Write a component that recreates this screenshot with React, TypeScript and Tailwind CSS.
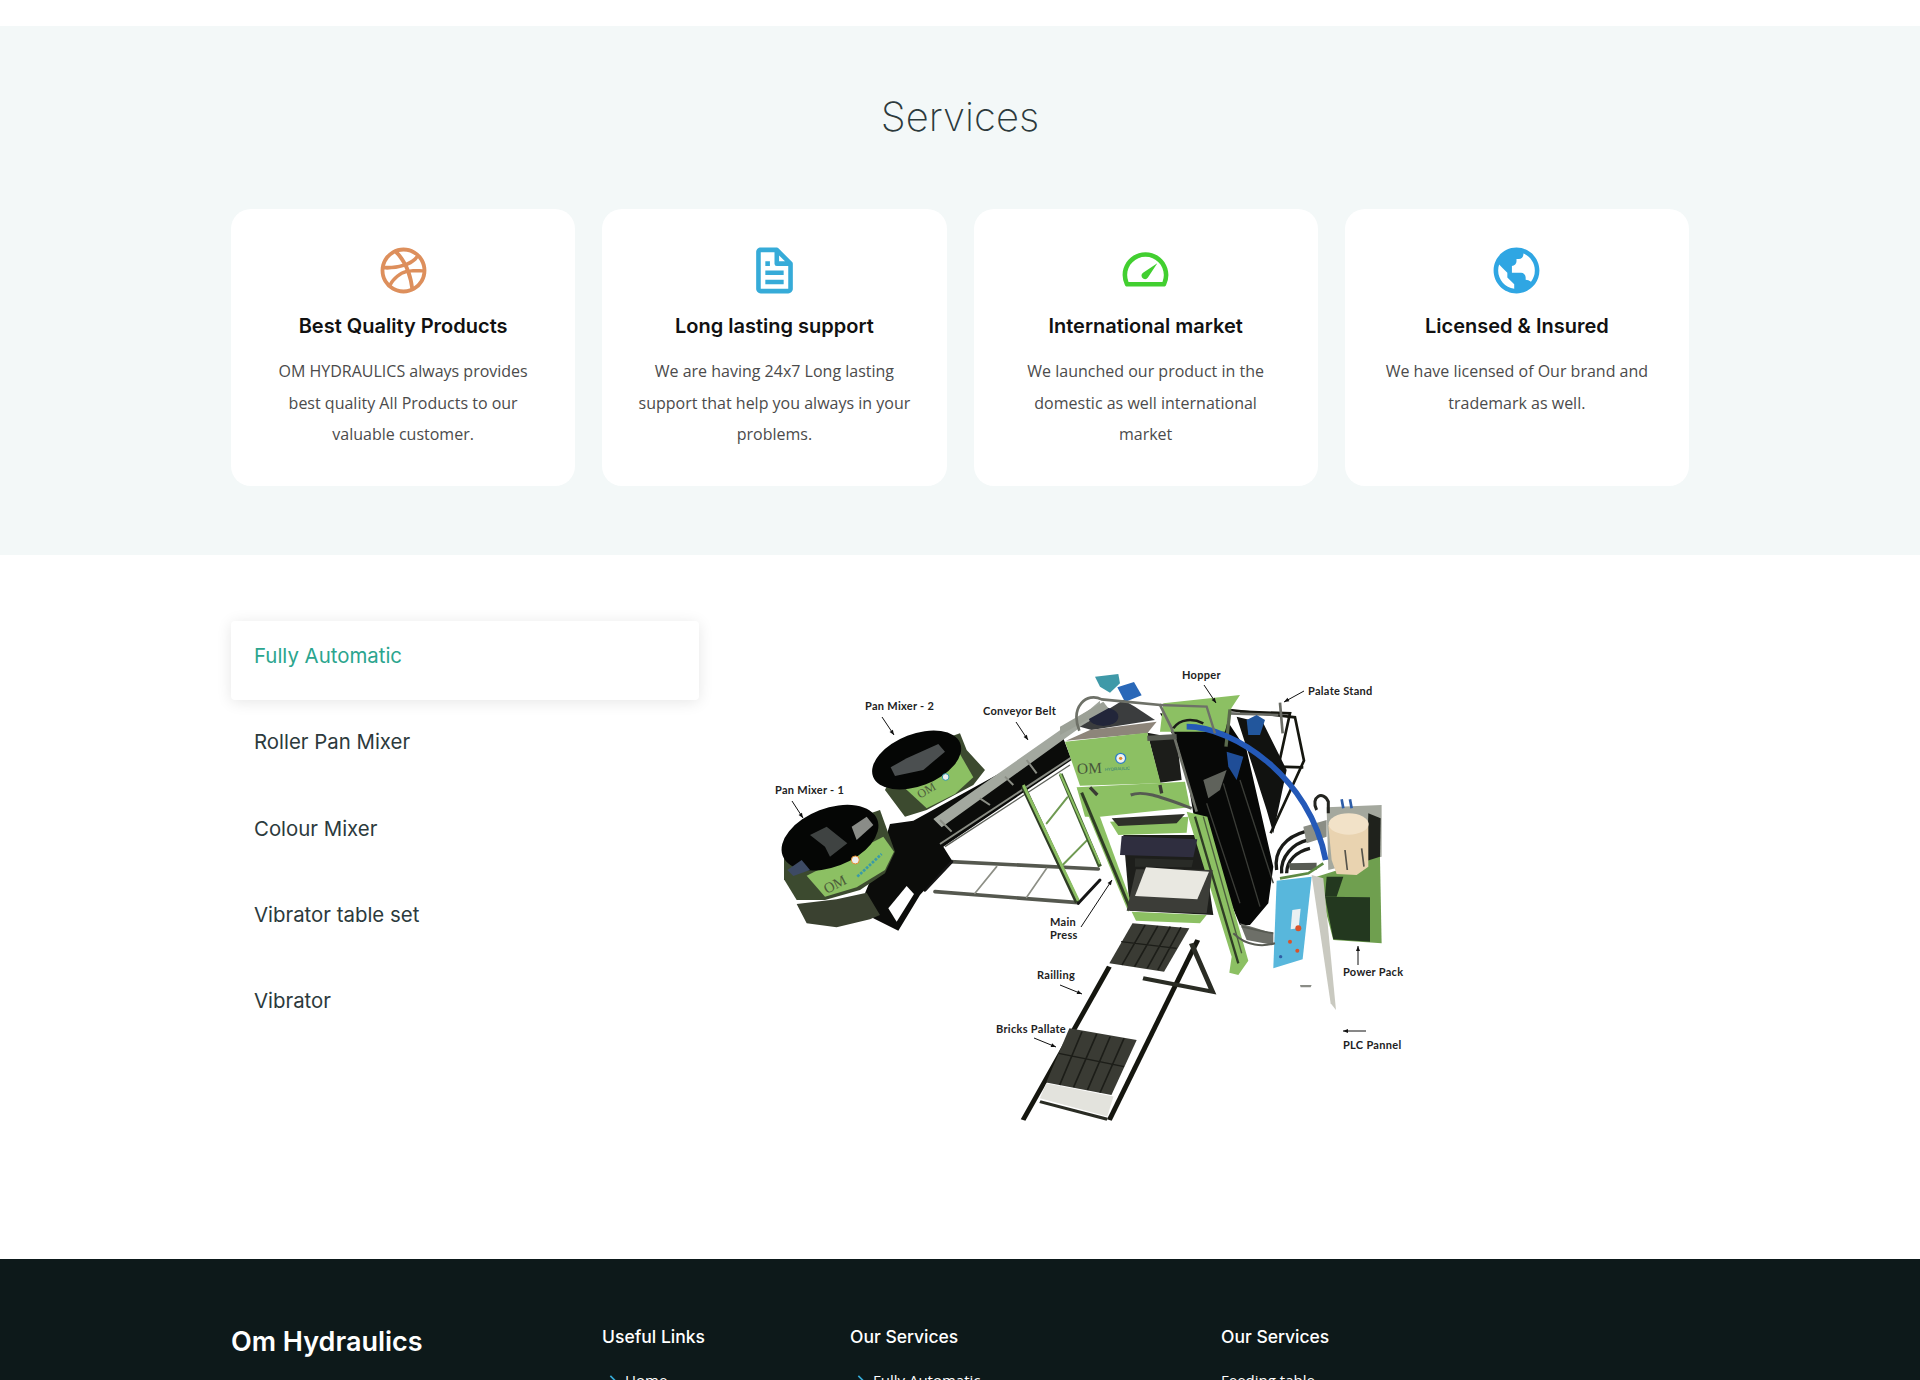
import { BiLogoDribbble, BiFile, BiTachometer, BiWorld, BiChevronRight } from 'react-icons/bi';

const GREEN = '#8cc063';
const DARK_GREEN = '#3c4a2f';

const services = [
  {
    icon: <BiLogoDribbble size={55} className="text-[#dd8f5c]" />,
    title: 'Best Quality Products',
    lines: ['OM HYDRAULICS always provides', 'best quality All Products to our', 'valuable customer.'],
  },
  {
    icon: <BiFile size={55} className="text-[#36abd8]" />,
    title: 'Long lasting support',
    lines: ['We are having 24x7 Long lasting', 'support that help you always in your', 'problems.'],
  },
  {
    icon: <BiTachometer size={55} className="text-[#42cf30]" />,
    title: 'International market',
    lines: ['We launched our product in the', 'domestic as well international', 'market'],
  },
  {
    icon: <BiWorld size={55} className="text-[#2fa6e3]" />,
    title: 'Licensed & Insured',
    lines: ['We have licensed of Our brand and', 'trademark as well.'],
  },
];

const tabs = ['Fully Automatic', 'Roller Pan Mixer', 'Colour Mixer', 'Vibrator table set', 'Vibrator'];

const labels = [
  { x: 1182, y: 679, t: 'Hopper' },
  { x: 1308, y: 695, t: 'Palate Stand' },
  { x: 865, y: 710, t: 'Pan Mixer - 2' },
  { x: 983, y: 715, t: 'Conveyor Belt' },
  { x: 775, y: 794, t: 'Pan Mixer - 1' },
  { x: 1050, y: 926, t: 'Main' },
  { x: 1050, y: 939, t: 'Press' },
  { x: 1343, y: 976, t: 'Power Pack' },
  { x: 1037, y: 979, t: 'Railling' },
  { x: 996, y: 1033, t: 'Bricks Pallate' },
  { x: 1343, y: 1049, t: 'PLC Pannel' },
];

// page coordinates: viewBox starts where the picture sits on the page
function Machine() {
  return (
    <svg width={660} height={500} viewBox="760 650 660 500" className="block shrink-0">
      {/* left half, mixers and conveyor */}
      <g transform="translate(770 670) scale(0.3333)">
        {/* frame under the conveyor */}
        <g fill="none" strokeLinecap="round">
          <path d="M540 575 L985 597" stroke="#55584f" strokeWidth="11" />
          <path d="M495 665 L925 698" stroke="#55584f" strokeWidth="11" />
          <path d="M545 575 L465 660" stroke="#151515" strokeWidth="10" />
          <path d="M925 700 L990 630" stroke="#151515" strokeWidth="9" />
          <path d="M615 670 L680 590 M770 682 L830 595" stroke="#8d8f86" strokeWidth="5" />
          <path d="M830 460 L892 382 M878 585 L950 512" stroke="#6f9a52" strokeWidth="6" />
        </g>
        {/* black base of the conveyor */}
        <path d="M360 462 L430 452 L880 205 L905 270 L520 530 L545 570 L450 675 L385 782 L310 745 L285 670 L330 560 Z" fill="#0b0c0a" />
        <path d="M355 715 L410 648 L432 672 L380 755 Z" fill="#fff" />
        <path d="M510 522 L905 262" stroke="#8a8d84" strokeWidth="6" />
        <path d="M525 530 L900 285" stroke="#5f625b" strokeWidth="4" />
        {/* belt */}
        <path d="M490 447 L960 118 L990 92 L990 130 L515 472 Z" fill="#a3a89f" />
        <path d="M630 385 L660 405 M510 450 L545 485 M770 270 L800 310 M705 320 L730 345" stroke="#8a8d84" strokeWidth="6" />
        {/* green ladder */}
        <path d="M760 350 L922 697" stroke="#2f3d25" strokeWidth="15" />
        <path d="M760 345 L925 692" stroke={GREEN} strokeWidth="9" />
        <path d="M872 312 L990 590" stroke="#3d5a2d" strokeWidth="12" />
        <path d="M870 310 L990 582" stroke={GREEN} strokeWidth="6" />
        {/* mixer 2 */}
        <path d="M345 360 L405 440 L470 420 L610 345 L645 300 L590 240 L570 190 L400 250 Z" fill={DARK_GREEN} />
        <path d="M405 355 L570 252 L610 322 L555 372 L470 415 Z" fill={GREEN} />
        <ellipse cx="440" cy="270" rx="140" ry="78" transform="rotate(-21 440 270)" fill="#050605" />
        <path d="M362 292 L410 265 L505 222 L525 245 L460 300 L375 318 Z" fill="#4b4f50" />
        <text x="450" y="386" transform="rotate(-30 450 386)" fontFamily="'Liberation Serif', serif" fontSize="36" fill="#4c5b3a">OM</text>
        <circle cx="527" cy="321" r="10" fill="#eee" stroke="#39a" strokeWidth="3" />
        {/* mixer 1 */}
        <path d="M80 702 L200 688 L290 668 L330 735 L300 748 L200 772 L110 760 Z" fill="#3a4130" />
        <path d="M42 520 L42 628 L80 690 L165 690 L270 660 L345 610 L375 545 L330 420 Z" fill={DARK_GREEN} />
        <path d="M110 617 L340 500 L372 545 L345 600 L260 652 L165 680 Z" fill={GREEN} />
        <ellipse cx="180" cy="503" rx="152" ry="88" transform="rotate(-21 180 503)" fill="#050605" />
        <path d="M120 495 L170 470 L232 520 L180 560 L165 530 Z" fill="#3f4342" />
        <path d="M245 470 L290 440 L310 465 L260 510 Z" fill="#8a8c88" />
        <path d="M52 600 L95 570 L120 600 L70 618 Z" fill="#3d4a64" />
        <text x="170" y="672" transform="rotate(-27 170 672)" fontFamily="'Liberation Serif', serif" fontSize="44" fill="#4c5b3a">OM</text>
        <circle cx="256" cy="570" r="12" fill="#eee" stroke="#e08a2c" strokeWidth="3" />
        <path d="M262 620 L335 552" stroke="#3a9aa8" strokeWidth="8" strokeDasharray="8 4" />
      </g>

      <g transform="translate(760 650) scale(0.4209 0.3333)">
        <path d="M830 950 L625 1410" stroke="#15160f" strokeWidth="12" />
        <path d="M1040 870 L830 1410" stroke="#15160f" strokeWidth="12" />
        <path d="M1025 880 L1075 1025 L910 985" stroke="#2a2c24" strokeWidth="12" fill="none" />
        <path d="M665 1355 L825 1408" stroke="#2a2c24" strokeWidth="9" />
        <path d="M680 1300 L840 1340 L825 1400 L665 1345 Z" fill="#e3e3dd" />
        <path d="M735 1135 L895 1170 L835 1335 L680 1298 Z" fill="#3a3b34" />
        <path d="M765 1145 L712 1305 M800 1152 L745 1312 M832 1160 L778 1320 M865 1165 L808 1328 M710 1210 L865 1250" stroke="#1c1d18" strokeWidth="4" />
        <path d="M885 820 L1020 835 L960 965 L830 940 Z" fill="#3a3b34" />
        <path d="M915 825 L860 945 M945 828 L890 950 M975 830 L920 955 M1000 832 L945 960 M858 875 L990 895" stroke="#1c1d18" strokeWidth="4" />
      </g>

      {/* right half, press and power pack */}
      <g transform="translate(1060 670) scale(0.3333)">
        {/* palate stand */}
        <g fill="none" stroke="#15160f" strokeWidth="8">
          <path d="M510 120 L705 142 L732 272 L632 490" />
          <path d="M540 125 L690 130 L655 290 L730 292" />
          <path d="M660 98 L668 190" stroke="#6b6d66" />
          <path d="M505 130 L655 135" stroke="#6b6d66" />
        </g>
        <path d="M530 140 L610 160 L680 300 L640 490 L620 420 Z" fill="#111210" />
        <path d="M560 150 L590 135 L615 150 L600 195 L565 195 Z" fill="#22569c" />
        {/* behind the press */}
        <path d="M190 495 L425 495 L460 735 L210 722 Z" fill="#1d1e1b" />
        {/* tower */}
        <path d="M300 130 L500 150 L560 240 L640 590 L625 700 L570 765 L540 765 L400 430 L385 340 L350 215 Z" fill="#070807" />
        <path d="M430 330 L500 300 L480 360 L445 385 Z" fill="#5f625b" />
        <path d="M500 245 L550 260 L530 330 L505 290 Z" fill="#1f4d97" />
        <g stroke="#3b3d38" strokeWidth="4">
          <path d="M490 340 L600 710" />
          <path d="M540 330 L640 640" />
          <path d="M440 400 L540 700" />
        </g>
        {/* hopper */}
        <path d="M310 100 L540 75 L512 118 L495 185 L300 185 Z" fill={GREEN} />
        <path d="M510 118 L498 230" stroke="#5b6a4d" strokeWidth="10" />
        {/* top motor */}
        <path d="M105 20 L175 12 L180 40 L150 68 L120 50 Z" fill="#3f99a8" />
        <path d="M172 52 L222 36 L245 76 L195 96 Z" fill="#2a68b8" />
        <path d="M60 170 L190 90 L225 110 L285 150 L95 180 Z" fill="#3b3d3e" />
        <ellipse cx="130" cy="140" rx="45" ry="28" fill="#22263a" />
        <path d="M0 170 L130 95 L145 115 L0 195 Z" fill="#9ba096" />
        {/* press box */}
        <path d="M18 212 L90 180 L290 155 L262 190 Z" fill="#8d857a" />
        <path d="M262 188 L350 205 L365 330 L300 338 Z" fill="#1c1d1a" />
        <path d="M15 215 L262 188 L302 340 L60 347 Z" fill={GREEN} />
        <text x="52" y="312" transform="rotate(-3 52 312)" fontFamily="'Liberation Serif', serif" fontSize="46" fill="#47553a">OM</text>
        <text x="135" y="303" transform="rotate(-3 135 303)" fontFamily="'Liberation Sans', sans-serif" fontSize="13" fill="#2a7b78">HYDRAULIC</text>
        <circle cx="182" cy="265" r="15" fill="#f2f2f2" stroke="#2d7fc4" strokeWidth="4" />
        <circle cx="182" cy="265" r="5" fill="#e08a2c" />
        {/* mid plate and columns */}
        <path d="M50 352 L375 335 L390 412 L120 440 L75 440 Z" fill={GREEN} />
        <path d="M212 375 C250 360 300 380 395 415" fill="none" stroke="#565a52" strokeWidth="9" />
        <path d="M90 352 L112 375 M300 345 L305 370" stroke="#3a3b34" strokeWidth="10" />
        <path d="M120 440 L215 700 L205 725 L50 352 Z" fill={GREEN} />
        <path d="M65 368 L210 715" stroke="#2f3d25" strokeWidth="9" />
        <path d="M380 425 L442 440 L565 872 L535 915 L508 908 L515 860 Z" fill={GREEN} />
        <path d="M405 440 L535 880" stroke="#2f3d25" strokeWidth="7" />
        <path d="M430 440 L545 850" stroke="#4b5d3c" strokeWidth="4" />
        {/* press head */}
        <path d="M150 455 L385 440 L380 488 L175 495 Z" fill={GREEN} />
        <path d="M155 445 L375 432 L350 460 L175 468 Z" fill="#2e3029" />
        <path d="M185 498 L412 508 L400 562 L180 555 Z" fill="#2f2e3f" />
        <path d="M225 565 L400 570 L395 592 L225 590 Z" fill="#292b27" />
        <path d="M228 598 L458 600 L440 730 L200 722 Z" fill="#3c3d38" />
        <path d="M258 592 L447 605 L412 688 L225 678 Z" fill="#e9e8e1" />
        <path d="M215 725 L440 735 L420 760 L228 752 Z" fill={GREEN} />
        {/* wet bricks on the pallet */}
        <path d="M540 760 L640 790 L640 825 L560 810 Z" fill="#6d6f68" />
        {/* hoses */}
        <path d="M650 600 C640 540 680 500 735 485 M665 610 C660 560 700 520 745 510 M680 610 C680 570 710 545 750 535" fill="none" stroke="#1a1b18" strokeWidth="10" />
        {/* power pack */}
        <path d="M800 412 L965 405 L965 560 L805 600 Z" fill="#a4a89e" />
        <path d="M925 430 L962 445 L960 560 L920 600 Z" fill="#1f221c" />
        <path d="M770 620 L960 560 L965 820 L820 810 Z" fill="#6f9f4f" />
        <path d="M795 680 L930 682 L930 815 L820 808 Z" fill="#23381f" />
        <path d="M800 620 L850 620 L830 680 L795 680 Z" fill="#23381f" />
        <path d="M805 465 L925 460 L925 590 L890 615 L830 612 L815 570 Z" fill="#e9d3b0" />
        <ellipse cx="866" cy="462" rx="60" ry="32" fill="#f2e2c8" />
        <path d="M855 540 L862 600 M905 535 L912 590" stroke="#55534b" strokeWidth="5" />
        <path d="M770 420 C750 380 790 360 805 395 L805 430" fill="none" stroke="#23241f" strokeWidth="9" />
        <path d="M845 388 L850 415 M870 388 L875 415" stroke="#2d5da8" strokeWidth="8" />
        <path d="M730 470 L800 450 L800 500 L740 520 Z" fill="#8b8e85" />
        <path d="M685 580 L770 578 L770 600 L690 600 Z" fill="#585b53" />
        <path d="M660 625 L745 610 L790 580" fill="none" stroke="#5d8a43" strokeWidth="8" />
        {/* hose over everything */}
        <path d="M380 170 C520 170 750 320 797 570" fill="none" stroke="#2459b8" strokeWidth="17" />
        {/* top pipes */}
        <path d="M58 182 C30 110 80 65 125 88 L300 105 L335 175 L410 425" fill="none" stroke="#6e7168" strokeWidth="8" />
        <path d="M300 105 L440 110 L465 190" fill="none" stroke="#6e7168" strokeWidth="7" />
        <path d="M340 175 C360 145 400 145 430 160" fill="none" stroke="#1c1d1a" strokeWidth="8" />
        <path d="M262 205 L350 200" stroke="#585b53" strokeWidth="16" />
        {/* control panel */}
        <path d="M755 615 L790 625 L828 1020 L812 1000 Z" fill="#c9c9c0" />
        <path d="M650 632 L755 620 L728 868 L640 895 Z" fill="#58b7dc" />
        <path d="M697 720 L722 716 L716 775 L692 778 Z" fill="#e9f0f2" />
        <circle cx="715" cy="775" r="9" fill="#d9532b" />
        <circle cx="690" cy="815" r="6" fill="#d9532b" />
        <circle cx="712" cy="842" r="6" fill="#d9532b" />
        <circle cx="662" cy="860" r="5" fill="#2f5fa5" />
        <path d="M720 945 L755 945 L752 952 L722 952 Z" fill="#8a8c86" />
        <path d="M545 770 C590 780 610 785 640 790 M520 790 C560 830 610 830 645 820" fill="none" stroke="#585b53" strokeWidth="6" />
      </g>

      {/* arrows */}
      <g stroke="#111" strokeWidth="1" fill="#111">
        <ArrowLine x1={882} y1={717} x2={894} y2={735} />
        <ArrowLine x1={1016} y1={722} x2={1028} y2={740} />
        <ArrowLine x1={792} y1={801} x2={803} y2={818} />
        <ArrowLine x1={1204} y1={685} x2={1216} y2={703} />
        <ArrowLine x1={1304} y1={691} x2={1284} y2={702} />
        <ArrowLine x1={1081} y1={927} x2={1112} y2={880} />
        <ArrowLine x1={1358} y1={965} x2={1358} y2={946} />
        <ArrowLine x1={1060} y1={985} x2={1082} y2={994} />
        <ArrowLine x1={1034} y1={1038} x2={1056} y2={1047} />
        <ArrowLine x1={1366} y1={1031} x2={1343} y2={1031} />
      </g>

      {labels.map((l) => (
        <text key={l.t} x={l.x} y={l.y} fontFamily="Lato, sans-serif" fontWeight={700} fontSize="11" letterSpacing="0.3" fill="#222">
          {l.t}
        </text>
      ))}
    </svg>
  );
}

function ArrowLine({ x1, y1, x2, y2 }: { x1: number; y1: number; x2: number; y2: number }) {
  const a = Math.atan2(y2 - y1, x2 - x1);
  const p = (d: number, o: number) => `${x2 - d * Math.cos(a) + o * Math.sin(a)},${y2 - d * Math.sin(a) - o * Math.cos(a)}`;
  return (
    <>
      <line x1={x1} y1={y1} x2={x2} y2={y2} />
      <polygon points={`${x2},${y2} ${p(5, 2)} ${p(5, -2)}`} stroke="none" />
    </>
  );
}

export default function App() {
  return (
    <div className="h-[1380px] overflow-hidden bg-white font-['Open_Sans',sans-serif]">
      <section className="mt-[26px] h-[529px] bg-[#f3f8f8] pt-[60px]">
        <h2 className="h-[60px] text-center font-['Inter',sans-serif] text-[40px] leading-[62px] font-extralight text-[#2c3a3c]">
          Services
        </h2>
        <div className="mx-auto mt-[63px] grid w-[1458px] grid-cols-4 gap-[27px]">
          {services.map((s) => (
            <div key={s.title} className="h-[277px] rounded-[20px] bg-white pt-[33px] text-center">
              <div className="flex h-[56px] items-center justify-center">{s.icon}</div>
              <h4 className="mt-[13px] font-['Inter',sans-serif] text-[20px] leading-[30px] font-semibold text-[#111]">
                {s.title}
              </h4>
              <p className="mt-[15px] text-[16px] leading-[31.5px] text-[#4b4b4b]">
                {s.lines.map((line) => (
                  <span key={line} className="block">
                    {line}
                  </span>
                ))}
              </p>
            </div>
          ))}
        </div>
      </section>

      <section className="mx-auto flex h-[704px] w-[1458px] items-start pt-[66px]">
        <ul className="flex w-[468px] shrink-0 flex-col gap-[7.25px]">
          {tabs.map((t, i) => (
            <li
              key={t}
              className={`h-[79px] rounded-[4px] pt-[20px] pl-[23px] font-['Inter',sans-serif] text-[20.4px] leading-[30px] ${
                i === 0 ? 'bg-white text-[#2ba58e] shadow-[0_2px_15px_rgba(0,0,0,0.1)]' : 'text-[#2c3a3c]'
              }`}
            >
              {t}
            </li>
          ))}
        </ul>
        <div className="mt-[29px] ml-[61px]">
          <Machine />
        </div>
      </section>

      <footer className="h-[200px] bg-[#0d191a] pt-[60px]">
        <div className="mx-auto flex w-[1458px] items-start text-white">
          <div className="w-[371px] pt-px font-['Inter',sans-serif] text-[27px] leading-[44px] font-semibold">Om Hydraulics</div>
          <FooterCol width="w-[248px]" title="Useful Links" links={['Home']} arrow />
          <FooterCol width="w-[371px]" title="Our Services" links={['Fully Automatic']} arrow />
          <FooterCol width="w-[300px]" title="Our Services" links={['Feeding table']} />
        </div>
      </footer>
    </div>
  );
}

function FooterCol({ width, title, links, arrow }: { width: string; title: string; links: string[]; arrow?: boolean }) {
  return (
    <div className={width}>
      <h4 className="font-['Inter',sans-serif] text-[17.5px] leading-[36px] font-medium">{title}</h4>
      <ul className="mt-[13px] text-[15px] leading-[24px]">
        {links.map((l) => (
          <li key={l} className="flex items-center">
            {arrow && <BiChevronRight size={20} className="mr-[3px] text-[#36abd8]" />}
            {l}
          </li>
        ))}
      </ul>
    </div>
  );
}
